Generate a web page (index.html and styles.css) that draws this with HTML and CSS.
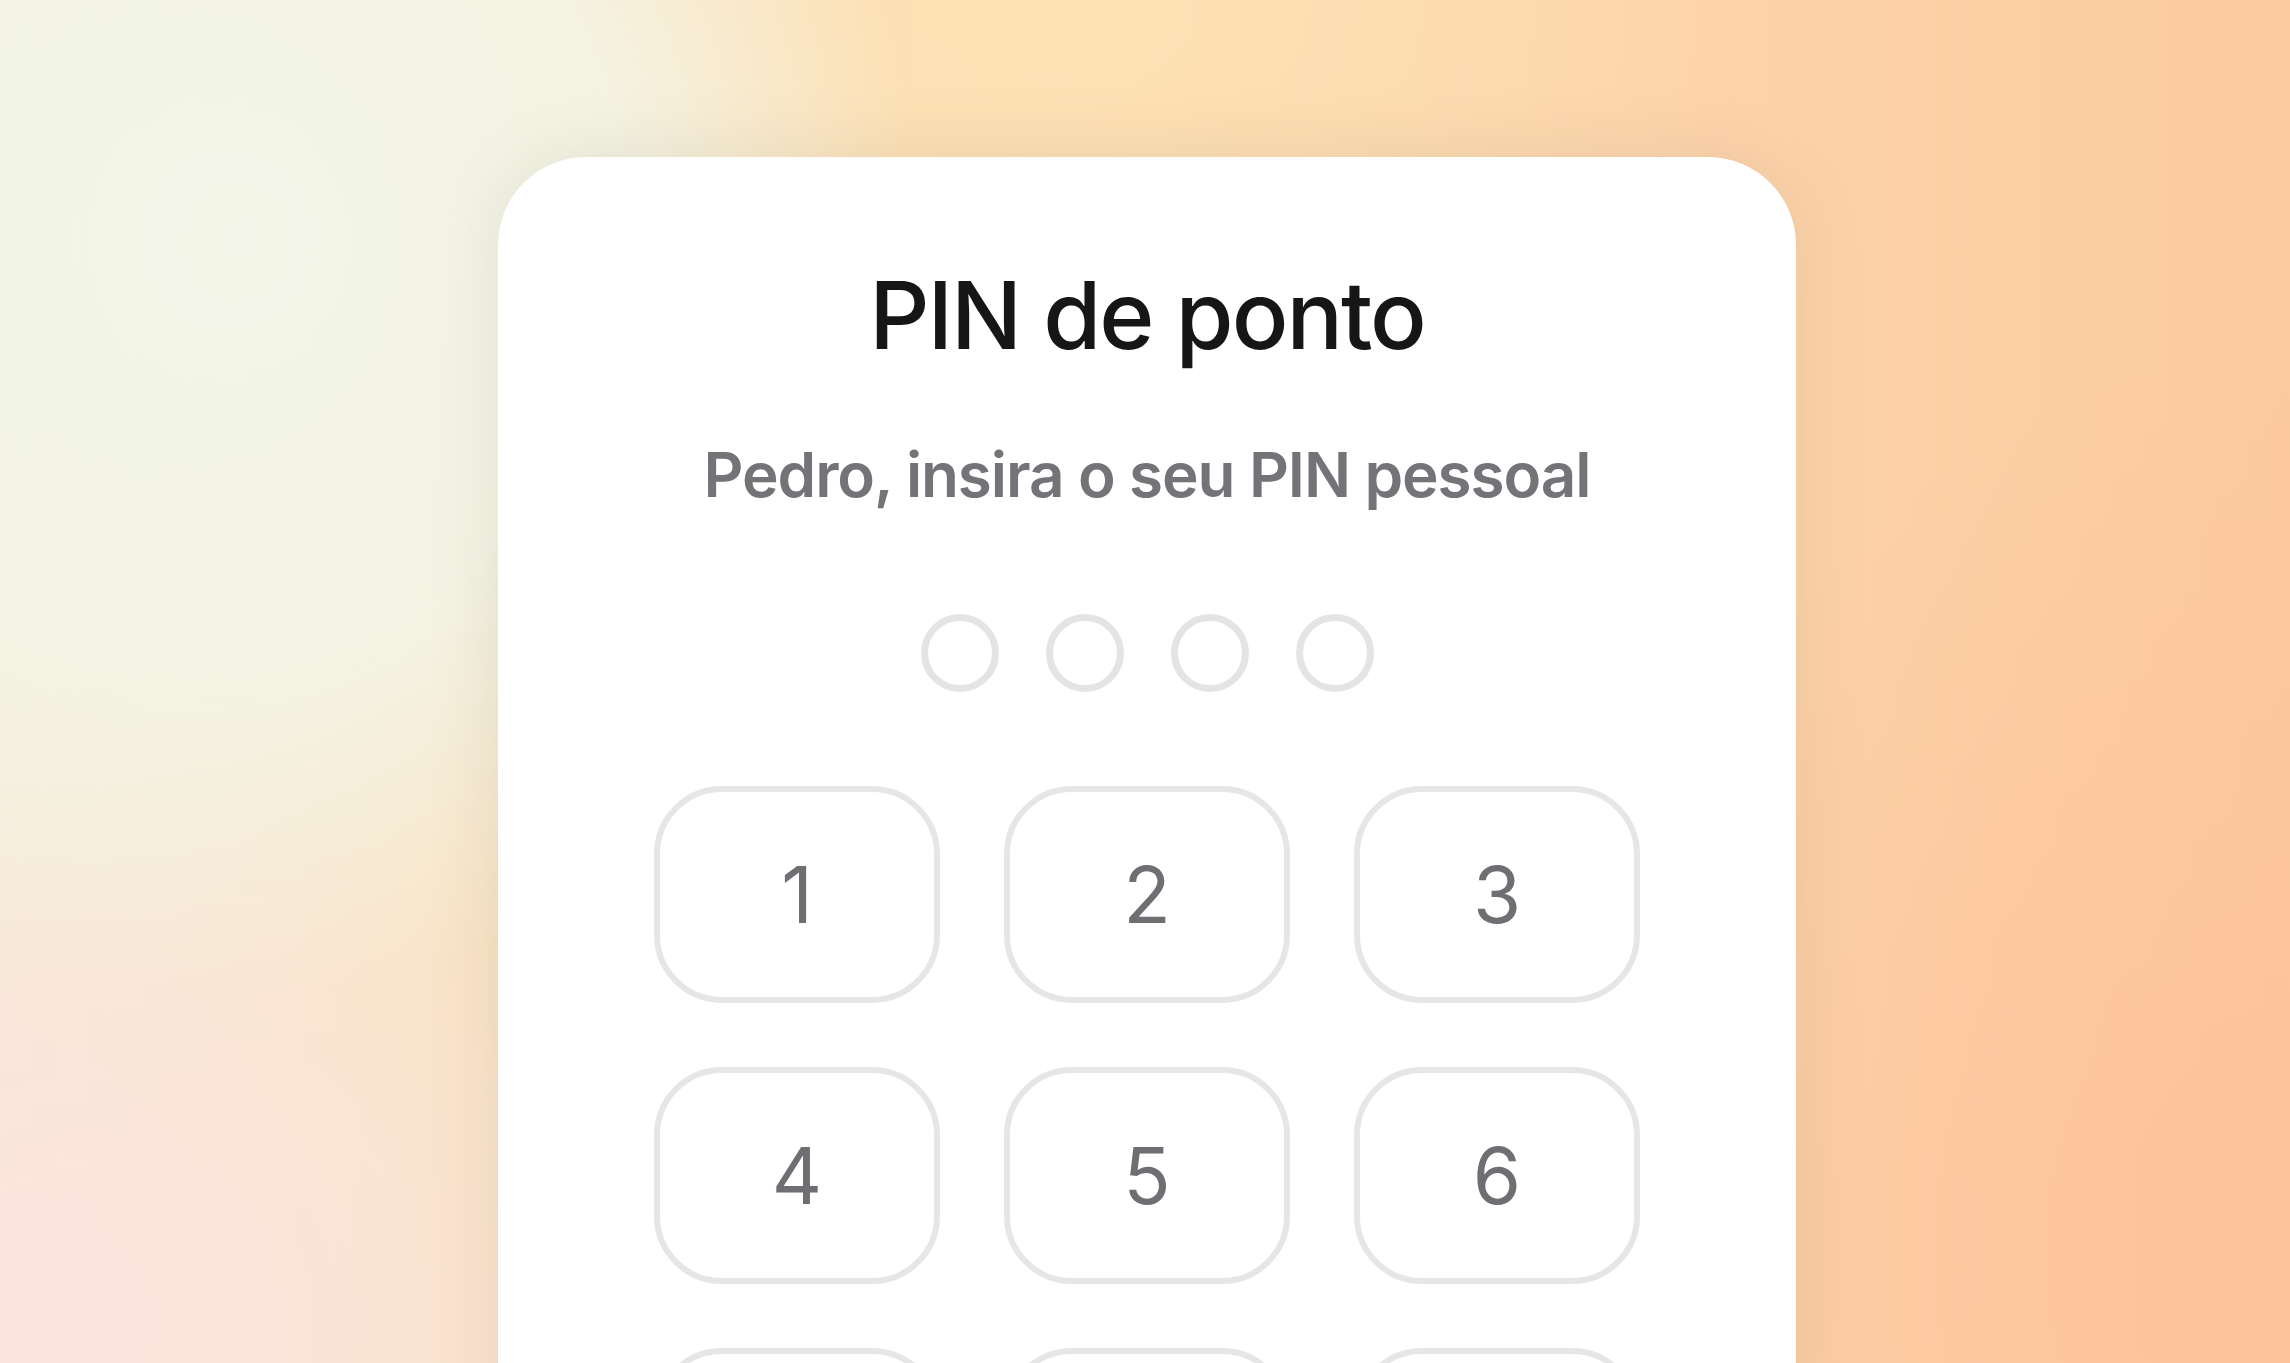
FILE: index.html
```html
<!DOCTYPE html>
<html lang="pt">
<head>
  <meta charset="UTF-8" />
  <meta name="viewport" content="width=device-width, initial-scale=1.0" />
  <title>PIN de ponto</title>
  <link rel="stylesheet" href="styles.css">
</head>
<body>
  <div class="backdrop">
    <div class="pin-card">
      <h1 class="pin-title">PIN de ponto</h1>
      <p class="pin-subtitle">Pedro, insira o seu PIN pessoal</p>
      <div class="pin-dots">
        <span class="dot"></span>
        <span class="dot"></span>
        <span class="dot"></span>
        <span class="dot"></span>
      </div>
      <div class="keypad">
        <button class="key">1</button>
        <button class="key">2</button>
        <button class="key">3</button>
        <button class="key">4</button>
        <button class="key">5</button>
        <button class="key">6</button>
        <button class="key">7</button>
        <button class="key">8</button>
        <button class="key">9</button>
      </div>
    </div>
  </div>
</body>
</html>
```

FILE: styles.css
```css
html, body {
  margin: 0;
  height: 100%;
  overflow: hidden;
}
body {
  font-family: 'Inter', 'Noto Sans', sans-serif;
  background-color: #fcd6ad;
  background-image:
    radial-gradient(ellipse 680px 760px at 240px 240px, rgba(243, 245, 232, 1) 0%, rgba(243, 245, 232, 0.9) 55%, rgba(243, 245, 232, 0) 100%),
    radial-gradient(ellipse 660px 560px at 60px 1320px, rgba(252, 226, 222, 1) 0%, rgba(252, 226, 222, 0) 100%),
    radial-gradient(ellipse 700px 480px at 1050px 0px, rgba(253, 226, 180, 1) 0%, rgba(253, 226, 180, 0) 100%),
    radial-gradient(ellipse 700px 900px at 2290px 1250px, rgba(252, 194, 156, 1) 0%, rgba(252, 194, 156, 0) 100%),
    linear-gradient(90deg, #f6ecd8 0%, #fddcb2 40%, #fdd3aa 75%, #fcca9f 100%);
}
.backdrop {
  padding: 157px 0 0 4px;
  display: flex;
  justify-content: center;
}
.pin-card {
  width: 1298px;
  height: 1400px;
  box-sizing: border-box;
  padding-top: 111px;
  background: #ffffff;
  border-radius: 88px 88px 0 0;
  box-shadow: 0 0 70px rgba(120, 110, 90, 0.14);
  display: flex;
  flex-direction: column;
  align-items: center;
}
.pin-title {
  margin: 0;
  font-size: 94px;
  line-height: 1;
  font-weight: 500;
  color: #161616;
  letter-spacing: -2px;
}
.pin-subtitle {
  margin: 82px 0 0;
  font-size: 62px;
  line-height: 1;
  font-weight: 600;
  color: #737378;
  letter-spacing: -1.1px;
}
.pin-dots {
  margin-top: 108px;
  display: flex;
  gap: 47px;
}
.dot {
  width: 78px;
  height: 78px;
  box-sizing: border-box;
  border: 7px solid #e4e4e4;
  border-radius: 50%;
}
.keypad {
  margin-top: 94px;
  display: grid;
  grid-template-columns: repeat(3, 286px);
  grid-auto-rows: 217px;
  column-gap: 64px;
  row-gap: 64px;
}
.key {
  display: flex;
  align-items: center;
  justify-content: center;
  box-sizing: border-box;
  border: 6px solid #e6e6e6;
  border-radius: 68px;
  background: #ffffff;
  font-family: 'Inter', 'Noto Sans', sans-serif;
  font-size: 78px;
  line-height: 1;
  font-weight: 400;
  color: #6e6e73;
  padding: 0;
}
```
